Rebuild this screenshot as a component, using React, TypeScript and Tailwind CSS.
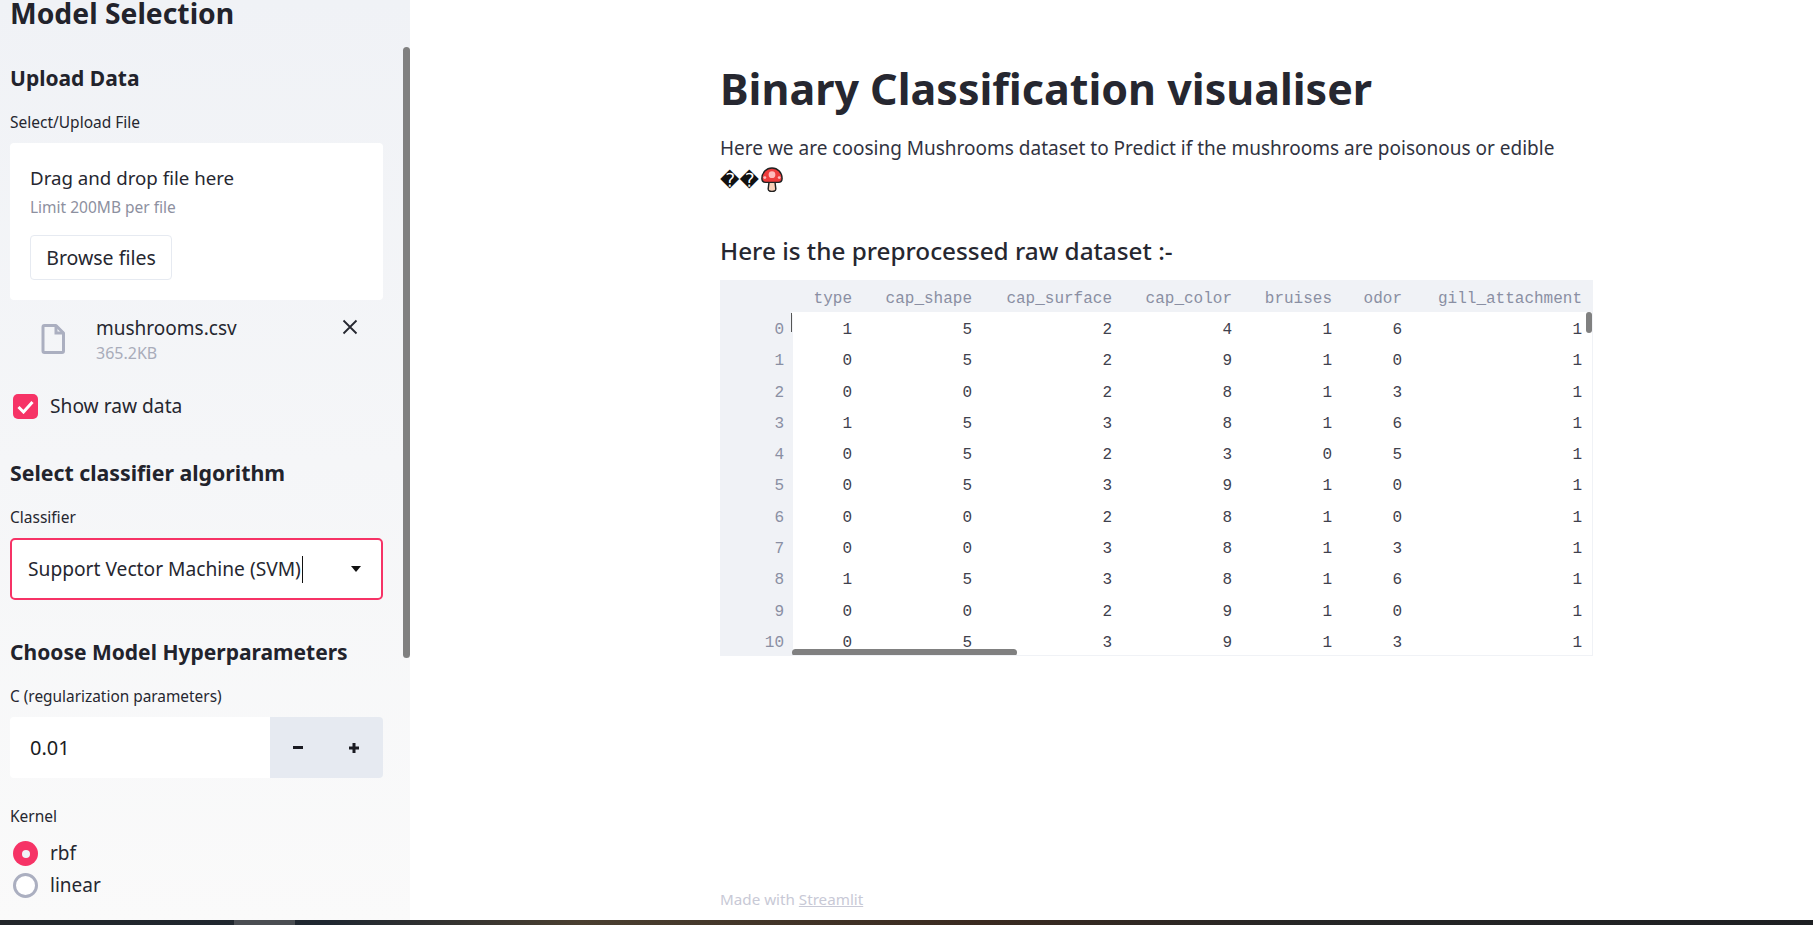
const columns = ["type", "cap_shape", "cap_surface", "cap_color", "bruises", "odor", "gill_attachment"];

const rows = [
  [1, 5, 2, 4, 1, 6, 1],
  [0, 5, 2, 9, 1, 0, 1],
  [0, 0, 2, 8, 1, 3, 1],
  [1, 5, 3, 8, 1, 6, 1],
  [0, 5, 2, 3, 0, 5, 1],
  [0, 5, 3, 9, 1, 0, 1],
  [0, 0, 2, 8, 1, 0, 1],
  [0, 0, 3, 8, 1, 3, 1],
  [1, 5, 3, 8, 1, 6, 1],
  [0, 0, 2, 9, 1, 0, 1],
  [0, 5, 3, 9, 1, 3, 1],
];

const gridCols = "grid grid-cols-[72px_75px_120px_140px_120px_100px_70px_180px] w-max";

function Mushroom() {
  return (
    <svg width="24" height="25" viewBox="0 0 24 26" className="ml-px inline-block align-[-5px]">
      <path d="M9 15h6l1 8c0 2-1 2.500-4 2.500S8 25 8 23z" fill="#fbd0b8" stroke="#222" strokeWidth="1.500" />
      <path d="M12 1C6 1 1.500 6 1.500 12c0 3 2 4 4 4h13c2 0 4-1 4-4C22.500 6 18 1 12 1z" fill="#ee3b3b" stroke="#222" strokeWidth="1.500" />
      <circle cx="12" cy="8" r="3.500" fill="#fbb" />
      <circle cx="4.500" cy="11" r="1.500" fill="#fbb" />
      <circle cx="19.500" cy="11" r="1.500" fill="#fbb" />
    </svg>
  );
}

function DataTable() {
  return (
    <div className="relative mt-[11px] w-[873px] h-[376px] overflow-hidden border-l border-b border-r border-[#f0f2f6] font-['Liberation_Mono',monospace] text-base leading-[31.3px]">
      <div className={gridCols + " h-[32px] bg-[#f0f2f6] pt-[4px] text-[#8a8fa3]"}>
        <div />
        {columns.map((c) => (
          <div key={c} className="pr-4 text-right">{c}</div>
        ))}
      </div>
      <div className="pt-[3px]">
        {rows.map((r, i) => (
          <div key={i} className={gridCols + " text-[#3f414d]"}>
            <div className="bg-[#f0f2f6] pr-[9px] text-right text-[#8a8fa3]">{i}</div>
            {r.map((v, j) => (
              <div key={j} className="pr-4 text-right">{v}</div>
            ))}
          </div>
        ))}
      </div>
      <div className="absolute left-0 top-[32px] h-[3px] w-[71px] bg-[#f0f2f6]" />
      <div className="absolute left-0 bottom-0 h-[8px] w-[71px] bg-[#f0f2f6]" />
      <div className="absolute left-[70px] top-[33px] h-[19px] w-px bg-[#555]" />
      <div className="absolute left-[865px] top-[32px] h-[21px] w-[6px] rounded-full bg-[#808080]" />
      <div className="absolute left-[71px] top-[369px] h-[7px] w-[225px] rounded-full bg-[#808080]" />
    </div>
  );
}

function Sidebar() {
  return (
    <aside className="relative w-[410px] shrink-0 overflow-hidden bg-gradient-to-b from-[#f0f2f6] to-[#fafafa] pl-[10px] pr-[27px] text-[#262730]">
      <h1 className="h-[27px] text-[28.300px] font-bold leading-[26px] text-[#22232c]">Model Selection</h1>
      <h2 className="mt-[36px] text-[21px] font-bold leading-[30px] text-[#22232c]">Upload Data</h2>
      <div className="mt-[19px] h-[20px] text-[15.500px] leading-5">Select/Upload File</div>
      <div className="mt-[11px] h-[157px] rounded bg-white pl-5 pt-[22px]">
        <div className="text-[18.700px] leading-[26px]">Drag and drop file here</div>
        <div className="mt-[7px] text-[15.500px] leading-[18px] text-[#8d90a0]">Limit 200MB per file</div>
        <div className="mt-[19px] flex h-[45px] w-[142px] items-center justify-center rounded border border-[#e6eaf1] text-[19.500px]">Browse files</div>
      </div>
      <div className="mt-[15px] flex h-[60px] items-start">
        <svg width="24" height="30" viewBox="0 0 24 30" className="ml-[31px] mt-[9px] shrink-0" fill="none" stroke="#abafc0" strokeWidth="3">
          <path d="M2 3a1.500 1.500 0 0 1 1.500-1.500H15L22.500 9v18a1.500 1.500 0 0 1-1.500 1.500H3.500A1.500 1.500 0 0 1 2 27z" strokeLinejoin="round" />
          <path d="M15 1.500V9h7.500" />
        </svg>
        <div className="ml-[31px] flex-1">
          <div className="text-[19px] leading-[26px]">mushrooms.csv</div>
          <div className="text-base leading-[24px] text-[#a9acba]">365.2KB</div>
        </div>
        <svg width="16" height="16" viewBox="0 0 16 16" className="mr-[25px] mt-[4px] shrink-0" stroke="#262730" strokeWidth="1.800">
          <path d="M1.500 1.500l13 13M14.500 1.500l-13 13" />
        </svg>
      </div>
      <div className="mt-[19px] flex h-[25px] items-center">
        <div className="ml-[3px] flex h-[25px] w-[25px] items-center justify-center rounded-[5px] bg-[#f63366]">
          <svg width="17" height="14" viewBox="0 0 17 14" fill="none" stroke="#fff" strokeWidth="3"><path d="M1.500 7l5 5 9-10" /></svg>
        </div>
        <span className="ml-3 text-[19.200px]">Show raw data</span>
      </div>
      <h2 className="mt-[39px] text-[21.300px] font-bold leading-[30px] text-[#22232c]">Select classifier algorithm</h2>
      <div className="mt-[19px] h-[20px] text-[15.500px] leading-5">Classifier</div>
      <div className="mt-[11px] flex h-[62px] items-center rounded-[5px] border-2 border-[#f63366] bg-white pl-[16px] pr-[20px]">
        <span className="text-[19.200px] text-[#262730]">Support Vector Machine (SVM)</span>
        <span className="ml-px h-[27px] w-px bg-[#111]" />
        <svg width="10" height="6" viewBox="0 0 10 6" className="ml-auto"><path d="M0 0h10L5 6z" fill="#111" /></svg>
      </div>
      <h2 className="mt-[37px] text-[21px] font-bold leading-[30px] text-[#22232c]">Choose Model Hyperparameters</h2>
      <div className="mt-[20px] h-[20px] text-[15.400px] leading-5">C (regularization parameters)</div>
      <div className="mt-[10px] flex h-[61px]">
        <div className="flex w-[260px] items-center rounded-l bg-white pl-5 text-xl text-[#1a1b22]">0.01</div>
        <div className="flex flex-1 items-center rounded-r bg-[#e6eaf1] text-[#1a1b22]">
          <svg width="10" height="3" viewBox="0 0 10 3" className="ml-[23px]"><rect width="10" height="3" fill="#1a1b22" /></svg>
          <svg width="10" height="10" viewBox="0 0 10 10" className="ml-[46px]"><path d="M0 3.500h10v3H0zM3.500 0h3v10h-3z" fill="#1a1b22" /></svg>
        </div>
      </div>
      <div className="mt-[28px] h-[20px] text-[15.500px] leading-5">Kernel</div>
      <div className="mt-[15px] flex h-[25px] items-center">
        <div className="ml-[3px] flex h-[25px] w-[25px] items-center justify-center rounded-full bg-[#f63366]">
          <div className="h-[8px] w-[8px] rounded-full bg-[#f0f2f6]" />
        </div>
        <span className="ml-3 text-[19px]">rbf</span>
      </div>
      <div className="mt-[7px] flex h-[25px] items-center">
        <div className="ml-[3px] h-[25px] w-[25px] rounded-full border-[3px] border-[#abafc0] bg-white" />
        <span className="ml-3 text-[19px]">linear</span>
      </div>
      <div className="absolute right-0 top-[47px] h-[611px] w-[7px] rounded-full bg-[#808080]" />
    </aside>
  );
}

export default function App() {
  return (
    <div className="flex h-[925px] w-[1813px] flex-col overflow-hidden bg-white font-['Noto_Sans',sans-serif]">
      <div className="flex h-[920px]">
        <Sidebar />
        <main className="flex flex-1 flex-col pl-[310px] pt-[55px] pb-[11px] text-[#262730]">
          <h1 className="text-[43px] font-bold leading-[68px] text-[#262730]">Binary Classification visualiser</h1>
          <p className="mt-[9px] w-[873px] text-[19px] leading-[32px] text-[#31333f]">
            Here we are coosing Mushrooms dataset to Predict if the mushrooms are poisonous or edible
            <br />
            <span className="font-['DejaVu_Sans',sans-serif] text-[#111]">{"\uFFFD\uFFFD"}</span>
            <Mushroom />
          </p>
          <h3 className="mt-[37px] text-[24.300px] font-medium leading-[36px] text-[#262730]">Here is the preprocessed raw dataset :-</h3>
          <DataTable />
          <footer className="mt-auto text-[15.200px] leading-5 text-[#c8c9d6]">
            Made with <span className="underline">Streamlit</span>
          </footer>
        </main>
      </div>
      <div className="flex h-[5px] bg-[linear-gradient(to_right,#22262a_0%,#1f2730_18%,#4a3f30_32%,#3a2a20_54%,#262626_72%,#1d1f22_100%)]">
        <div className="ml-[234px] w-[61px] bg-[#4a4d52]" />
      </div>
    </div>
  );
}
